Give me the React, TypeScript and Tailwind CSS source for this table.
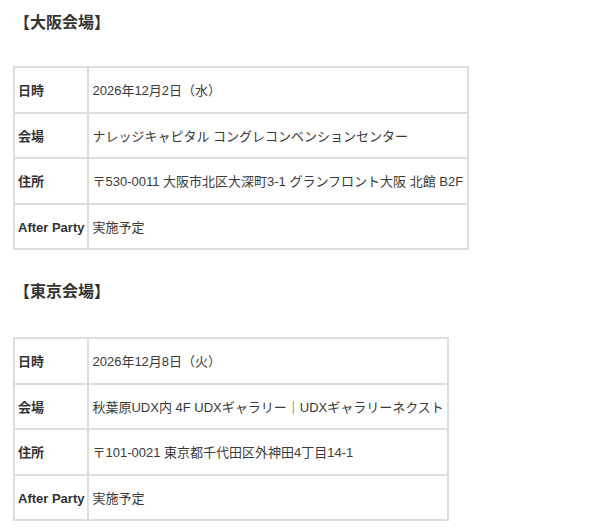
const font = { fontFamily: '"Liberation Sans", "Noto Sans CJK JP", sans-serif' };

type Row = { label: string; value: string };

const osaka: Row[] = [
  { label: "日時", value: "2026年12月2日（水）" },
  { label: "会場", value: "ナレッジキャピタル コングレコンベンションセンター" },
  { label: "住所", value: "〒530-0011 大阪市北区大深町3-1 グランフロント大阪 北館 B2F" },
  { label: "After Party", value: "実施予定" },
];

const tokyo: Row[] = [
  { label: "日時", value: "2026年12月8日（火）" },
  { label: "会場", value: "秋葉原UDX内 4F UDXギャラリー｜UDXギャラリーネクスト" },
  { label: "住所", value: "〒101-0021 東京都千代田区外神田4丁目14-1" },
  { label: "After Party", value: "実施予定" },
];

function VenueTable({ rows, width }: { rows: Row[]; width: string }) {
  return (
    <table
      className={`${width} border-separate border-spacing-0 border-l-2 border-t-2 border-[#dddddd] text-[13px] text-[#333333]`}
    >
      <tbody>
        {rows.map((row) => (
          <tr key={row.label} className="h-[45.5px]">
            <td className="w-[74px] whitespace-nowrap border-b-2 border-r-2 border-[#dddddd] px-[3px] pt-[2px] align-middle font-bold">
              {row.label}
            </td>
            <td className="whitespace-nowrap border-b-2 border-r-2 border-[#dddddd] px-[3px] pt-[2px] align-middle text-[#3a3a3a]">
              {row.value}
            </td>
          </tr>
        ))}
      </tbody>
    </table>
  );
}

export default function App() {
  return (
    <div className="min-h-screen bg-white pl-[13px] pt-[11px]" style={font}>
      <h2 className="h-[24px] pl-[1px] text-base font-bold leading-[24px] text-[#333333]">【大阪会場】</h2>
      <div className="mt-[31px]">
        <VenueTable rows={osaka} width="w-[456px]" />
      </div>
      <h2 className="mt-[30px] h-[24px] pl-[1px] text-base font-bold leading-[24px] text-[#333333]">【東京会場】</h2>
      <div className="mt-[33px]">
        <VenueTable rows={tokyo} width="w-[433px]" />
      </div>
    </div>
  );
}
